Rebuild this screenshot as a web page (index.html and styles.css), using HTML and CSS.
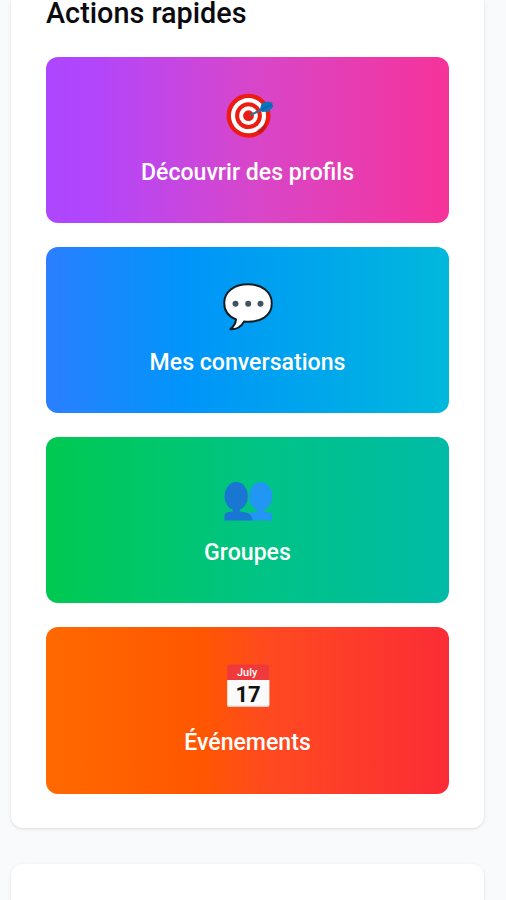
FILE: index.html
```html
<!DOCTYPE html>
<html lang="fr">
<head>
    <meta charset="UTF-8">
    <meta name="viewport" content="width=device-width, initial-scale=1.0">
    <title>Actions rapides</title>
    <link rel="stylesheet" href="styles.css">
</head>
<body>

<main class="page">
    <section class="panel quick-actions">
        <h2>Actions rapides</h2>
        <div class="action-list">
            <a class="action action-discover" href="#">
                <svg class="action-icon" viewBox="0 0 64 52" aria-hidden="true">
                    <circle cx="32.5" cy="24.7" r="22" fill="#ed1c12"/>
                    <circle cx="32.5" cy="24.7" r="17.6" fill="#fff"/>
                    <circle cx="32.5" cy="24.7" r="13.4" fill="#ed1c12"/>
                    <circle cx="32.5" cy="24.7" r="9.4" fill="#fff"/>
                    <circle cx="32.5" cy="24.7" r="5.4" fill="#ed1c12"/>
                    <path d="M41 39 L50 33 Q50 38 44 43 Z" fill="#8c1530" opacity=".45"/>
                    <path d="M34.5 24 L47 18" stroke="#3c6c8c" stroke-width="2.2" stroke-linecap="round"/>
                    <path d="M44 18 L45.5 12.5 L51 10.5 L56 11.5 L57.3 15.5 L53 20.5 L46 21 Z" fill="#0b72bd"/>
                    <path d="M45.5 18.5 L56 13.5" stroke="#075c9c" stroke-width="1"/>
                </svg>
                <span>Découvrir des profils</span>
            </a>
            <a class="action action-chat" href="#">
                <svg class="action-icon" viewBox="0 0 64 52" aria-hidden="true">
                    <path d="M32 3.3 C18 3.3 8.2 11 8.2 22 C8.2 30 12.5 35.5 20 38.4 C19.6 42.5 18 45.5 14.3 48.2 C20 48.4 25.3 45.8 28 40.6 C45 42 55.8 34.5 55.8 22.5 C55.8 11 46 3.3 32 3.3 Z" fill="#fff" stroke="#101c22" stroke-width="2" stroke-linejoin="round"/>
                    <circle cx="19.5" cy="22.7" r="3" fill="#40565f"/>
                    <circle cx="32.2" cy="22.7" r="3" fill="#40565f"/>
                    <circle cx="44.5" cy="22.7" r="3" fill="#40565f"/>
                </svg>
                <span>Mes conversations</span>
            </a>
            <a class="action action-groups" href="#">
                <svg class="action-icon" viewBox="0 0 64 52" aria-hidden="true">
                    <path d="M32 49.5 V46 Q32 41.5 37 41 L41 40.5 V37 H48 V40.5 L52 41 Q56 41.8 56 45 V49.5 Z" fill="#2196f3"/>
                    <ellipse cx="44.7" cy="25.3" rx="11.6" ry="14.2" fill="#2196f3"/>
                    <path d="M8.5 49.5 V45 Q8.5 41.8 12.5 41 L16.7 40.5 V37 H23.7 V40.5 L30 41.5 Q36 43 36.5 49.5 Z" fill="#1976d2"/>
                    <ellipse cx="20.2" cy="25.3" rx="11.6" ry="14.2" fill="#1976d2"/>
                </svg>
                <span>Groupes</span>
            </a>
            <a class="action action-events" href="#">
                <svg class="action-icon" viewBox="0 0 64 52" aria-hidden="true">
                    <path d="M11.2 19 V5.5 Q11.2 3.5 13.2 3.5 H51.2 Q53.2 3.5 53.2 5.5 V19 Z" fill="#f0393a"/>
                    <path d="M11.2 19 H53.4 V44 Q53.4 45.7 51.7 45.7 H12.9 Q11.2 45.7 11.2 44 Z" fill="#fafafa"/>
                    <path d="M11.7 45.2 H52.9" stroke="#d5c8c8" stroke-width="1"/>
                    <text class="cal-month" x="31.2" y="14.6">July</text>
                    <text class="cal-day" x="32" y="40.5">17</text>
                </svg>
                <span>Événements</span>
            </a>
        </div>
    </section>

    <section class="panel next-panel"></section>
</main>

</body>
</html>
```
FILE: styles.css
```css
* { box-sizing: border-box; }
body { margin: 0; background: #f9fafc; font-family: Roboto, "Liberation Sans", sans-serif; }
.page { height: 900px; padding: 0 22px 0 11px; display: flex; flex-direction: column; gap: 36px; overflow: hidden; }
.panel { background: #fff; border-radius: 12px; box-shadow: 0 1px 4px rgba(0, 0, 0, 0.08), 0 1px 2px rgba(0, 0, 0, 0.06); }
.quick-actions { flex: none; height: 828px; padding: 0 35px; border-radius: 0 0 12px 12px; }
.quick-actions h2 { margin: 0; height: 56.6px; color: #0a0a0f; font-size: 28.8px; line-height: 26px; font-weight: 500; white-space: nowrap; }
.action-list { display: flex; flex-direction: column; gap: 23.8px; }
.action {
    height: 166.4px;
    padding-top: 34.3px;
    display: flex;
    flex-direction: column;
    align-items: center;
    border-radius: 12px;
    color: #fff;
    font-size: 23.1px;
    line-height: 32px;
    font-weight: 500;
    text-decoration: none;
}
.action span { margin-top: 13.7px; }
.action-icon { width: 64px; height: 52px; flex: none; }
.action-discover { background: linear-gradient(to right, #ad46ff, #b246fb 12%, #d846c9 52%, #f6339a); }
.action-chat { background: linear-gradient(to right, #2b7fff, #0095fa 35%, #00a5ec 65%, #00b8db); }
.action-groups { background: linear-gradient(to right, #00c951, #00c482 50%, #00bba7); }
.action-events { background: linear-gradient(to right, #ff6900, #ff5700 38%, #ff4a20 55%, #fb2c36); }
.cal-month { fill: #fff; font-size: 11px; font-weight: 500; text-anchor: middle; }
.cal-day { fill: #111; font-size: 22px; font-weight: 700; text-anchor: middle; }
.next-panel { flex: 1; border-radius: 12px 12px 0 0; }
```
